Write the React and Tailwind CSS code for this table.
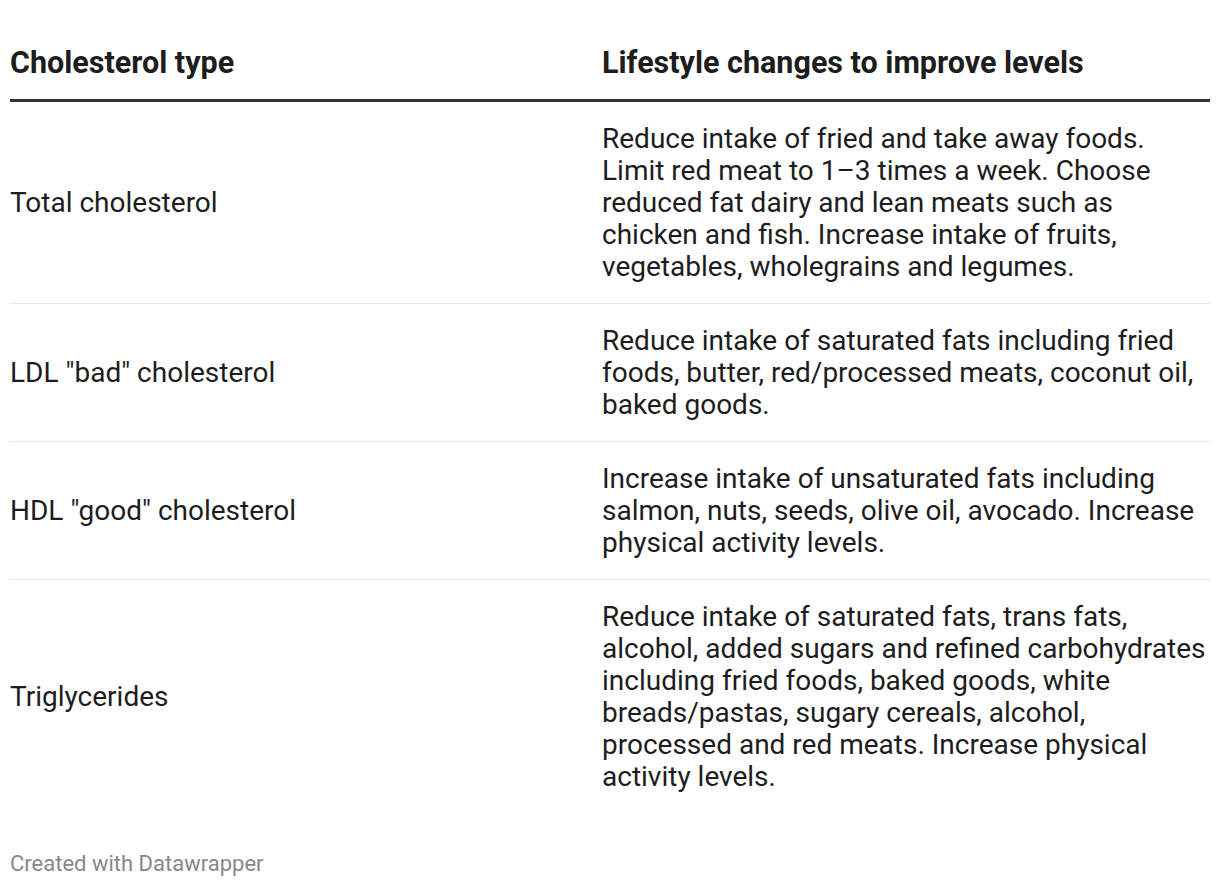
import React from "react";

const rows = [
  {
    type: "Total cholesterol",
    text: "Reduce intake of fried and take away foods. Limit red meat to 1–3 times a week. Choose reduced fat dairy and lean meats such as chicken and fish. Increase intake of fruits, vegetables, wholegrains and legumes.",
  },
  {
    type: 'LDL "bad" cholesterol',
    text: "Reduce intake of saturated fats including fried foods, butter, red/processed meats, coconut oil, baked goods.",
  },
  {
    type: 'HDL "good" cholesterol',
    text: "Increase intake of unsaturated fats including salmon, nuts, seeds, olive oil, avocado. Increase physical activity levels.",
  },
  {
    type: "Triglycerides",
    text: "Reduce intake of saturated fats, trans fats, alcohol, added sugars and refined carbohydrates including fried foods, baked goods, white breads/pastas, sugary cereals, alcohol, processed and red meats. Increase physical activity levels.",
  },
];

const App = () => {
  return (
    <div className="bg-white w-[1220px] h-[888px] px-[10px] text-[#1d1d1d] font-['Roboto',sans-serif]">
      <div className="grid grid-cols-[592px_608px] pt-[44px] pb-[17px] border-b-[3px] border-[#333333]">
        <div className="text-[30.5px] leading-[38px] font-bold">Cholesterol type</div>
        <div className="text-[30.5px] leading-[38px] font-bold">Lifestyle changes to improve levels</div>
      </div>
      {rows.map((r, i) => (
        <div
          key={i}
          className={
            "grid grid-cols-[592px_604px] items-center pt-[21px] pb-[20px] text-[28px] leading-[32px] " +
            (i < rows.length - 1 ? "border-b border-[#e6e6e6]" : "")
          }
        >
          <div>{r.type}</div>
          <div>{r.text}</div>
        </div>
      ))}
      <div className="pt-[37px] text-[22px] leading-[28px] text-[#888888]">Created with Datawrapper</div>
    </div>
  );
};

export default App;
